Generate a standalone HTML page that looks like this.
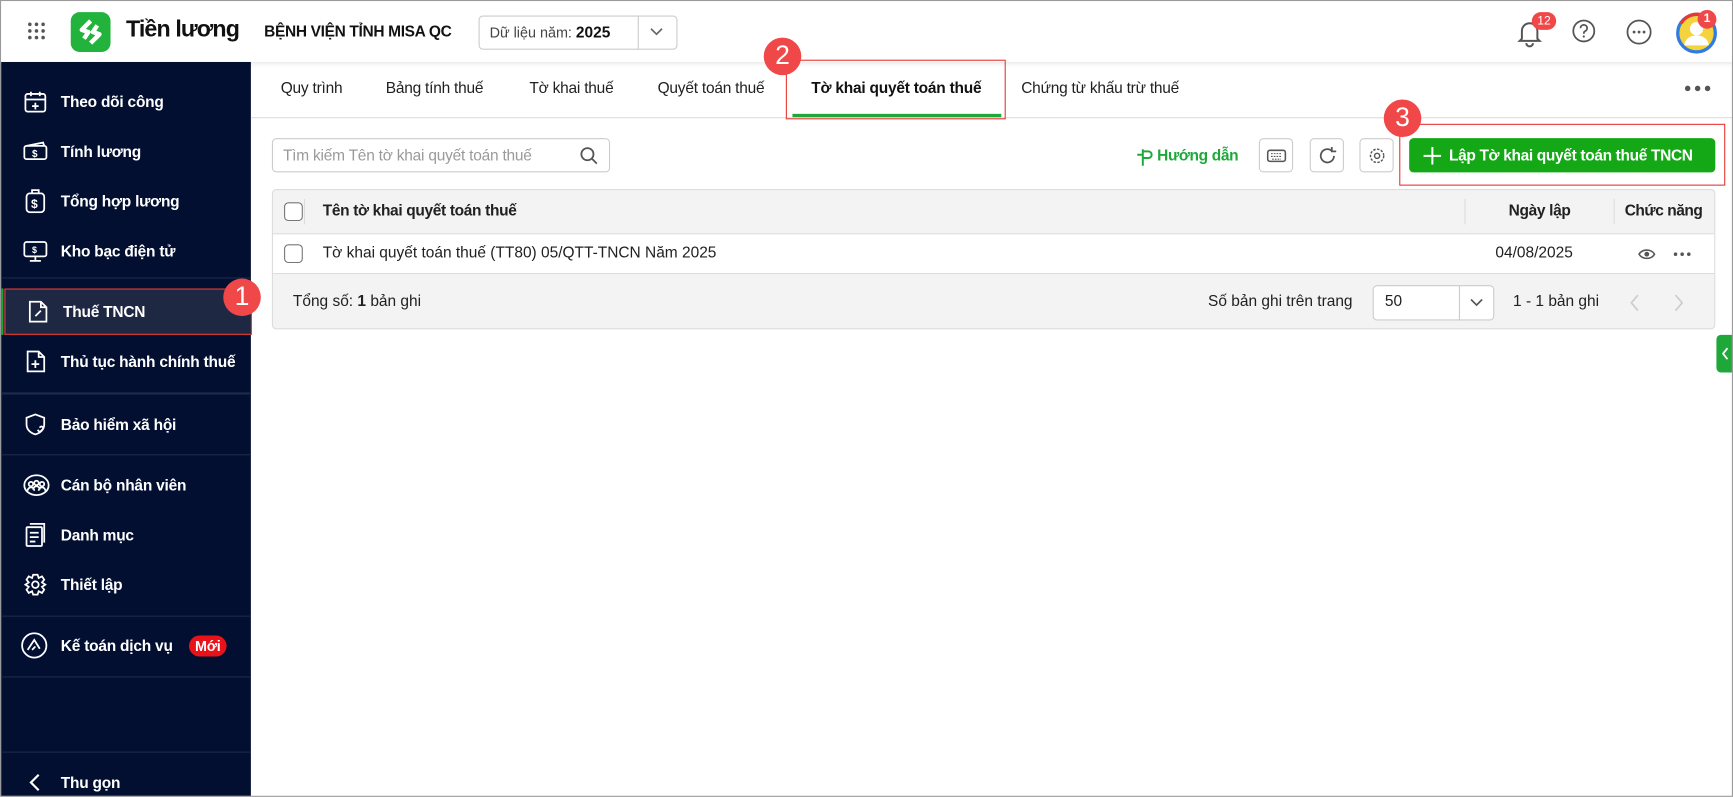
<!DOCTYPE html>
<html><head><meta charset="utf-8"><style>
*{box-sizing:border-box;margin:0;padding:0}
html,body{width:1733px;height:797px;overflow:hidden;background:#fff}
#w{position:absolute;left:0;top:0;width:1568px;height:721px;transform:scale(1.10523);transform-origin:0 0;font-family:"Liberation Sans",sans-serif;color:#212121;font-size:14px;border:1px solid #9a9a9a;overflow:hidden}
.a{position:absolute}
.hdr{left:0;top:0;width:1568px;height:55px;background:#fff;box-shadow:0 2px 4px rgba(0,0,0,.1);z-index:3}
.sb{left:0;top:55px;width:226px;height:666px;background:#020f30}
.it{position:absolute;left:0;width:226px;height:42px;color:#fff;font-weight:bold;font-size:14px;line-height:42px;padding-left:54px;letter-spacing:-0.2px}
.it svg{position:absolute;left:20px;top:10px}
.dv{position:absolute;left:0;width:226px;height:1px;background:#1f2a48}
.tab{position:absolute;top:70px;font-size:14px;color:#212121;letter-spacing:-0.2px}
.btn{position:absolute;top:124px;width:31px;height:31px;border:1px solid #ccc;border-radius:4px;background:#fff}
.rb{position:absolute;border:1.5px solid #e53935;z-index:5}
.bd{position:absolute;width:34px;height:34px;border-radius:50%;background:#f04848;color:#fff;font-size:24px;text-align:center;line-height:34px;z-index:6}
.cb{position:absolute;width:17px;height:17px;border:1px solid #777;border-radius:4px;background:#fff}
</style></head><body><div id="w">
<div class="a hdr">
 <svg class="a" style="left:23px;top:18px" width="18" height="18"><g fill="#555"><circle cx="3" cy="3" r="1.6"/><circle cx="9" cy="3" r="1.6"/><circle cx="15" cy="3" r="1.6"/><circle cx="3" cy="9" r="1.6"/><circle cx="9" cy="9" r="1.6"/><circle cx="15" cy="9" r="1.6"/><circle cx="3" cy="15" r="1.6"/><circle cx="9" cy="15" r="1.6"/><circle cx="15" cy="15" r="1.6"/></g></svg>
 <div class="a" style="left:63px;top:10px;width:36px;height:36px;border-radius:8px;background:#21b33c"></div>
 <svg class="a" style="left:68px;top:15px" width="26" height="26"><path d="M13 3 L5 11 L11 13 L7 19 M13 23 L21 15 L15 13 L19 7" stroke="#fff" stroke-width="4" fill="none" stroke-linejoin="round"/></svg>
 <div class="a" style="left:113px;top:14px;font-size:21px;font-weight:bold;color:#111;letter-spacing:-0.8px">Tiền lương</div>
 <div class="a" style="left:238px;top:19px;font-size:14px;font-weight:bold;color:#111;letter-spacing:-0.3px">BỆNH VIỆN TỈNH MISA QC</div>
 <div class="a" style="left:432px;top:13px;width:180px;height:31px;border:1px solid #ccc;border-radius:4px"></div>
 <div class="a" style="left:576px;top:13px;width:1px;height:31px;background:#ccc"></div>
 <div class="a" style="left:442px;top:20px;font-size:13px;color:#444">Dữ liệu năm: <b style="color:#111;font-size:14px">2025</b></div>
 <svg class="a" style="left:587px;top:24px" width="12" height="8"><path d="M1 1 L6 6 L11 1" stroke="#666" stroke-width="1.5" fill="none"/></svg>
 <svg class="a" style="left:1371px;top:16px" width="24" height="26"><path d="M5 18 V11 a7 7 0 0 1 14 0 V18 L21 20 H3 Z M9 22 a3 3 0 0 0 6 0" stroke="#555" stroke-width="1.8" fill="none"/></svg>
 <div class="a" style="left:1385px;top:10px;width:22px;height:16px;border-radius:8px;background:#f04848;color:#fff;font-size:11px;text-align:center;line-height:16px">12</div>
 <svg class="a" style="left:1421px;top:16px" width="22" height="22"><circle cx="11" cy="11" r="9.5" stroke="#555" stroke-width="1.6" fill="none"/><path d="M8 8.5 a3 3 0 1 1 4 2.8 c-1 .4 -1 1 -1 2.2" stroke="#555" stroke-width="1.6" fill="none"/><circle cx="11" cy="16" r="1" fill="#555"/></svg>
 <svg class="a" style="left:1470px;top:16px" width="24" height="24"><circle cx="12" cy="12" r="10.5" stroke="#555" stroke-width="1.6" fill="none"/><circle cx="7.5" cy="12" r="1.3" fill="#555"/><circle cx="12" cy="12" r="1.3" fill="#555"/><circle cx="16.5" cy="12" r="1.3" fill="#555"/></svg>
 <svg class="a" style="left:1515px;top:10px" width="38" height="38"><circle cx="19" cy="19" r="17" fill="#f5d33c" stroke="#2f7de1" stroke-width="3"/><path d="M5 10 A17 17 0 0 1 22 2" stroke="#e53935" stroke-width="3" fill="none"/><circle cx="19" cy="15" r="6" fill="#fff"/><path d="M8 30 a11 9 0 0 1 22 0" fill="#fff"/></svg>
 <div class="a" style="left:1535px;top:8px;width:17px;height:17px;border-radius:50%;background:#f04848;color:#fff;font-size:11px;font-weight:bold;text-align:center;line-height:17px">1</div>
</div>
<div class="a sb">
 <div class="it" style="top:15px"><svg width="22" height="22"><g stroke="#fff" stroke-width="1.6" fill="none"><rect x="2" y="4" width="18" height="16" rx="2"/><path d="M2 9H20M7 2V6M15 2V6M11 12V18M8 15H14"/></g></svg>Theo dõi công</div>
 <div class="it" style="top:60px"><svg width="22" height="22"><g stroke="#fff" stroke-width="1.6" fill="none"><rect x="1" y="6" width="20" height="12" rx="2"/><path d="M3 6 L18 3 L19 6"/></g><text x="8" y="16" fill="#fff" font-size="9" font-family="Liberation Sans">$</text></svg>Tính lương</div>
 <div class="it" style="top:105px"><svg width="22" height="22"><g stroke="#fff" stroke-width="1.6" fill="none"><rect x="3" y="4" width="16" height="17" rx="3"/><path d="M8 4 V1 H14 V4"/></g><text x="7" y="17" fill="#fff" font-size="11" font-family="Liberation Sans">$</text></svg>Tổng hợp lương</div>
 <div class="it" style="top:150px"><svg width="22" height="22"><g stroke="#fff" stroke-width="1.6" fill="none"><rect x="1" y="3" width="20" height="13" rx="2"/><path d="M11 16V20M6 20H16"/></g><text x="8" y="13" fill="#fff" font-size="8" font-family="Liberation Sans">$</text></svg>Kho bạc điện tử</div>
 <div class="dv" style="top:195px"></div>
 <div class="it" style="top:205px;background:#1e2843;border-left:2px solid #1fa83a;height:42px"><svg width="22" height="22"><g stroke="#fff" stroke-width="1.6" fill="none"><path d="M4 2H14L19 7V20H4Z M14 2V7H19"/><path d="M9 15 L14 10"/></g></svg>Thuế TNCN</div>
 <div class="it" style="top:250px"><svg width="22" height="22"><g stroke="#fff" stroke-width="1.6" fill="none"><path d="M4 2H14L19 7V20H4Z M14 2V7H19 M11 10V17 M7.5 13.5H14.5"/></g></svg>Thủ tục hành chính thuế</div>
 <div class="dv" style="top:299px;height:2px"></div>
 <div class="it" style="top:307px"><svg width="22" height="22"><g stroke="#fff" stroke-width="1.6" fill="none"><path d="M11 2 L19 5 V11 C19 16 15 19 11 20 C7 19 3 16 3 11 V5 Z"/><path d="M13 16 l2 2 l3 -3 a1.5 1.5 0 0 0 -3 -1"/></g></svg>Bảo hiểm xã hội</div>
 <div class="dv" style="top:355px"></div>
 <div class="it" style="top:362px"><svg width="24" height="22"><g stroke="#fff" stroke-width="1.6" fill="none"><ellipse cx="12" cy="11" rx="11" ry="9"/><circle cx="7" cy="10" r="2"/><circle cx="12" cy="9" r="2"/><circle cx="17" cy="10" r="2"/><path d="M4 16a3 3 0 0 1 6 0M9 15a3 3 0 0 1 6 0M14 16a3 3 0 0 1 6 0"/></g></svg>Cán bộ nhân viên</div>
 <div class="it" style="top:407px"><svg width="22" height="22"><g stroke="#fff" stroke-width="1.6" fill="none"><rect x="3" y="4" width="14" height="17" rx="1"/><path d="M6 1H19V18 M6 9H14M6 13H14M6 17H11"/></g></svg>Danh mục</div>
 <div class="it" style="top:452px"><svg width="22" height="22"><g stroke="#fff" stroke-width="1.6" fill="none"><circle cx="11" cy="11" r="3"/><path d="M9 2H13L14 5L17 3.5L19 6.5L17 9L20 11L17 13L19 15.5L17 18.5L14 17L13 20H9L8 17L5 18.5L3 15.5L5 13L2 11L5 9L3 6.5L5 3.5L8 5Z"/></g></svg>Thiết lập</div>
 <div class="dv" style="top:501px"></div>
 <div class="it" style="top:507px"><svg width="24" height="24" style="left:18px;top:9px"><g stroke="#fff" stroke-width="1.6" fill="none"><circle cx="12" cy="12" r="11"/><path d="M6 16 L12 7 L17 15 M10 16 L13 13"/></g></svg>Kế toán dịch vụ<span style="position:absolute;left:170px;top:12px;width:34px;height:19px;border-radius:10px;background:#e8121b;color:#fff;font-size:13px;line-height:19px;text-align:center">Mới</span></div>
 <div class="dv" style="top:556px"></div>
 <div class="dv" style="top:624px"></div>
 <div class="it" style="top:631px"><svg width="22" height="22"><path d="M14 4 L7 11 L14 18" stroke="#fff" stroke-width="2" fill="none"/></svg>Thu gọn</div>
</div>
<div class="a" style="left:226px;top:105px;width:1342px;height:1px;background:#ddd"></div>
<div class="tab" style="left:253px">Quy trình</div>
<div class="tab" style="left:348px">Bảng tính thuế</div>
<div class="tab" style="left:478px">Tờ khai thuế</div>
<div class="tab" style="left:594px">Quyết toán thuế</div>
<div class="tab" style="left:733px;font-weight:bold;color:#111">Tờ khai quyết toán thuế</div>
<div class="a" style="left:716px;top:102px;width:189px;height:3px;background:#1fa83a"></div>
<div class="tab" style="left:923px">Chứng từ khấu trừ thuế</div>
<svg class="a" style="left:1522px;top:75px" width="26" height="8"><g fill="#555"><circle cx="4" cy="4" r="2.5"/><circle cx="13" cy="4" r="2.5"/><circle cx="22" cy="4" r="2.5"/></g></svg>
<div class="a" style="left:245px;top:124px;width:306px;height:31px;border:1px solid #ccc;border-radius:4px"></div>
<div class="a" style="left:255px;top:131px;color:#9a9a9a;font-size:14px;letter-spacing:-0.2px">Tìm kiếm Tên tờ khai quyết toán thuế</div>
<svg class="a" style="left:523px;top:131px" width="18" height="18"><circle cx="7.5" cy="7.5" r="5.5" stroke="#555" stroke-width="1.6" fill="none"/><path d="M11.5 11.5 L16 16" stroke="#555" stroke-width="1.6"/></svg>
<svg class="a" style="left:1025px;top:132px" width="18" height="18"><path d="M8 2V17 M8 4H13a3 3 0 0 1 0 6H8 M8 7H3" stroke="#1fa83a" stroke-width="1.8" fill="none"/></svg>
<div class="a" style="left:1046px;top:131px;color:#1fa83a;font-size:14px;font-weight:bold;letter-spacing:-0.3px">Hướng dẫn</div>
<div class="btn" style="left:1138px"><svg style="position:absolute;left:6px;top:9px" width="18" height="12"><rect x="1" y="1" width="16" height="10" rx="2" stroke="#555" stroke-width="1.4" fill="none"/><path d="M4 4H14M4 6.5H14M5 9H13" stroke="#555" stroke-width="1" stroke-dasharray="1.5 1"/></svg></div>
<div class="btn" style="left:1184px"><svg style="position:absolute;left:6px;top:6px" width="18" height="18"><path d="M15 9a6 6 0 1 1 -2 -4.5 M13 1V5H17" stroke="#555" stroke-width="1.6" fill="none"/></svg></div>
<div class="btn" style="left:1229px"><svg style="position:absolute;left:7px;top:7px" width="16" height="16"><circle cx="8" cy="8" r="2.3" stroke="#555" stroke-width="1.3" fill="none"/><circle cx="8" cy="8" r="6" stroke="#555" stroke-width="1.3" fill="none" stroke-dasharray="2.2 1.3"/></svg></div>
<div class="a" style="left:1274px;top:124px;width:277px;height:31px;background:#14a716;border-radius:4px;color:#fff;font-weight:bold;font-size:14px;line-height:31px;padding-left:36px;letter-spacing:-0.3px">Lập Tờ khai quyết toán thuế TNCN</div>
<svg class="a" style="left:1287px;top:132px" width="16" height="16"><path d="M8 0V16M0 8H16" stroke="#fff" stroke-width="1.8"/></svg>
<div class="a" style="left:245px;top:170px;width:1306px;height:127px;border:1px solid #ddd;border-radius:4px;overflow:hidden;background:#f3f3f3">
 <div class="a" style="left:0;top:39px;width:1306px;height:37px;background:#fff;border-top:1px solid #ddd;border-bottom:1px solid #ddd"></div>
 <div class="a" style="left:28px;top:8px;width:1px;height:23px;background:#ddd"></div>
 <div class="a" style="left:1078px;top:8px;width:1px;height:23px;background:#ddd"></div>
 <div class="a" style="left:1213px;top:8px;width:1px;height:23px;background:#ddd"></div>
 <div class="cb" style="left:10px;top:11px"></div>
 <div class="a" style="left:45px;top:10px;font-weight:bold;letter-spacing:-0.3px">Tên tờ khai quyết toán thuế</div>
 <div class="a" style="left:1118px;top:10px;font-weight:bold;letter-spacing:-0.3px">Ngày lập</div>
 <div class="a" style="left:1223px;top:10px;font-weight:bold;letter-spacing:-0.4px">Chức năng</div>
 <div class="cb" style="left:10px;top:49px"></div>
 <div class="a" style="left:45px;top:48px">Tờ khai quyết toán thuế (TT80) 05/QTT-TNCN Năm 2025</div>
 <div class="a" style="left:1106px;top:48px">04/08/2025</div>
 <svg class="a" style="left:1235px;top:51px" width="16" height="14"><path d="M1 7C4 2 12 2 15 7C12 12 4 12 1 7Z" stroke="#555" stroke-width="1.4" fill="none"/><circle cx="8" cy="7" r="2.2" fill="#555"/></svg>
 <svg class="a" style="left:1266px;top:55px" width="18" height="6"><g fill="#555"><circle cx="3" cy="3" r="1.6"/><circle cx="9" cy="3" r="1.6"/><circle cx="15" cy="3" r="1.6"/></g></svg>
 <div class="a" style="left:18px;top:92px">Tổng số: <b>1</b> bản ghi</div>
 <div class="a" style="left:846px;top:92px">Số bản ghi trên trang</div>
 <div class="a" style="left:995px;top:86px;width:110px;height:32px;border:1px solid #ccc;border-radius:4px;background:#fff"></div>
 <div class="a" style="left:1073px;top:86px;width:1px;height:32px;background:#ccc"></div>
 <div class="a" style="left:1006px;top:92px">50</div>
 <svg class="a" style="left:1083px;top:98px" width="12" height="8"><path d="M1 1 L6 6 L11 1" stroke="#555" stroke-width="1.5" fill="none"/></svg>
 <div class="a" style="left:1122px;top:92px">1 - 1 bản ghi</div>
 <svg class="a" style="left:1227px;top:94px" width="10" height="16"><path d="M8 1 L2 8 L8 15" stroke="#ccc" stroke-width="1.5" fill="none"/></svg>
 <svg class="a" style="left:1267px;top:94px" width="10" height="16"><path d="M2 1 L8 8 L2 15" stroke="#ccc" stroke-width="1.5" fill="none"/></svg>
</div>
<div class="a" style="left:1552px;top:302px;width:16px;height:34px;background:#1fa83a;border-radius:4px 0 0 4px"></div>
<svg class="a" style="left:1556px;top:313px" width="8" height="12"><path d="M6 1 L2 6 L6 11" stroke="#fff" stroke-width="1.6" fill="none"/></svg>
<div class="rb" style="left:3px;top:260px;width:224px;height:42px"></div>
<div class="bd" style="left:201px;top:251px">1</div>
<div class="rb" style="left:710px;top:53px;width:199px;height:54px"></div>
<div class="bd" style="left:690px;top:33px">2</div>
<div class="rb" style="left:1265px;top:111px;width:295px;height:56px"></div>
<div class="bd" style="left:1251px;top:89px">3</div>
</div></body></html>
